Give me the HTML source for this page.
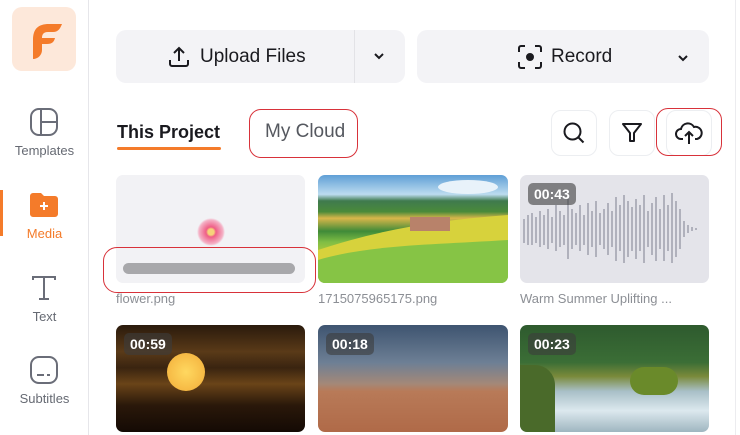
<!DOCTYPE html>
<html><head><meta charset="utf-8"><style>
*{box-sizing:border-box;margin:0;padding:0}
body{width:740px;height:435px;overflow:hidden;background:#fff;font-family:"Liberation Sans",sans-serif;position:relative;color:#1a1a1f}
.a{position:absolute}
.side{left:0;top:0;width:89px;height:435px;border-right:1px solid #e6e6ea}
.lbl{position:absolute;width:89px;text-align:center;font-size:13px;color:#666a73;left:0}
.btn{background:#f3f3f6;border-radius:10px}
.ib{width:46px;height:46px;border:1px solid #eceef1;border-radius:10px;background:#fff}
.card{border-radius:7px;overflow:hidden}
.dur{position:absolute;left:8px;top:8px;background:rgba(60,60,60,.6);color:#fff;font-weight:bold;font-size:14px;padding:3px 6px;border-radius:5px}
.name{font-size:13px;color:#8c8f95}
.red{border:1.5px solid #d8323a;border-radius:12px}
</style></head><body>
<div class="a side"></div>
<div class="a" style="left:12px;top:7px;width:64px;height:64px;background:#fde8da;border-radius:10px">
<svg width="64" height="64" viewBox="0 0 64 64"><path d="M21 50 L21 33 C21 22 26 17 37 17 L50 17 C48 22 46 25 41 25 L36 25 C31 25 30 28 30 31 L43 31 C42 35 40 37 35 37 L30 37 L30 43 C30 48 26 52 21 52 Z" fill="#f47b2a"/></svg></div>
<svg class="a" style="left:29px;top:107px" width="30" height="30" viewBox="0 0 30 30" fill="none" stroke="#6a6d78" stroke-width="2"><rect x="2" y="2" width="26" height="26" rx="8"/><path d="M12 2V28M12 15H28"/></svg>
<div class="lbl" style="top:143px">Templates</div>
<div class="a" style="left:0;top:190px;width:3px;height:46px;background:#f47b2a"></div>
<svg class="a" style="left:29px;top:191px" width="30" height="28" viewBox="0 0 30 28"><path d="M1 5a3 3 0 0 1 3-3h8l3 3h11a3 3 0 0 1 3 3v15a3 3 0 0 1-3 3H4a3 3 0 0 1-3-3z" fill="#f47b2a"/><path d="M15 11v8M11 15h8" stroke="#fff" stroke-width="2"/></svg>
<div class="lbl" style="top:226px;color:#f47b2a">Media</div>
<svg class="a" style="left:30px;top:274px" width="28" height="28" viewBox="0 0 28 28" fill="none" stroke="#6a6d78" stroke-width="2"><path d="M3 6V3H25V6M14 3V25M9 25H19"/></svg>
<div class="lbl" style="top:309px">Text</div>
<svg class="a" style="left:29px;top:355px" width="30" height="30" viewBox="0 0 30 30" fill="none" stroke="#6a6d78" stroke-width="2"><rect x="2" y="2" width="26" height="26" rx="8"/><path d="M8 20H15M18 20H21"/></svg>
<div class="lbl" style="top:391px">Subtitles</div>

<div class="a btn" style="left:116px;top:30px;width:289px;height:53px"></div>
<div class="a" style="left:354px;top:30px;width:1px;height:53px;background:#e2e2e6"></div>
<svg class="a" style="left:167px;top:45px" width="24" height="24" viewBox="0 0 24 24" fill="none" stroke="#1a1a1f" stroke-width="2"><path d="M12 16V3M7 8l5-5 5 5M3 15v4a2 2 0 0 0 2 2h14a2 2 0 0 0 2-2v-4"/></svg>
<div class="a" style="left:200px;top:46px;font-size:19px">Upload Files</div>
<svg class="a" style="left:373px;top:52px" width="12" height="8" viewBox="0 0 12 8" fill="none" stroke="#1a1a1f" stroke-width="2"><path d="M2 2l4 4 4-4"/></svg>
<div class="a btn" style="left:417px;top:30px;width:292px;height:53px"></div>
<svg class="a" style="left:517px;top:44px" width="26" height="26" viewBox="0 0 26 26" fill="none" stroke="#1a1a1f" stroke-width="2"><path d="M2 8V4a2 2 0 0 1 2-2h4M18 2h4a2 2 0 0 1 2 2v4M24 18v4a2 2 0 0 1-2 2h-4M8 24H4a2 2 0 0 1-2-2v-4"/><circle cx="13" cy="13" r="3" fill="#1a1a1f"/></svg>
<div class="a" style="left:551px;top:46px;font-size:19px">Record</div>
<svg class="a" style="left:677px;top:54px" width="12" height="8" viewBox="0 0 12 8" fill="none" stroke="#1a1a1f" stroke-width="2"><path d="M2 2l4 4 4-4"/></svg>

<div class="a" style="left:117px;top:122px;font-size:18px;font-weight:bold">This Project</div>
<div class="a" style="left:117px;top:147px;width:104px;height:3px;background:#f47b2a;border-radius:2px"></div>
<div class="a red" style="left:249px;top:109px;width:109px;height:49px"></div>
<div class="a" style="left:265px;top:121px;font-size:19px;color:#55585f">My Cloud</div>

<div class="a ib" style="left:551px;top:110px"></div>
<svg class="a" style="left:562px;top:121px" width="24" height="24" viewBox="0 0 24 24" fill="none" stroke="#1a1a1f" stroke-width="2"><circle cx="10.5" cy="10.5" r="8"/><path d="M16.5 16.5l5 5"/></svg>
<div class="a ib" style="left:609px;top:110px"></div>
<svg class="a" style="left:620px;top:121px" width="24" height="24" viewBox="0 0 24 24" fill="none" stroke="#1a1a1f" stroke-width="2" stroke-linejoin="round"><path d="M3 3h18l-7 9v8h-4v-8z"/></svg>
<div class="a ib" style="left:666px;top:110px"></div>
<div class="a red" style="left:656px;top:108px;width:66px;height:48px"></div>
<svg class="a" style="left:674px;top:121px" width="30" height="24" viewBox="0 0 30 24" fill="none" stroke="#1a1a1f" stroke-width="2"><path d="M9 18H7a5 5 0 0 1 0-10 7 7 0 0 1 13-2 6 6 0 0 1 3 12h-2M15 23V11M11 15l4-4 4 4"/></svg>

<div class="a" style="left:735px;top:0;width:1px;height:435px;background:#ececef"></div>

<!-- row1 -->
<div class="a card" style="left:116px;top:175px;width:189px;height:108px;background:#f2f2f5"></div>
<div class="a" style="left:196px;top:218px;width:30px;height:28px;border-radius:50%;background:radial-gradient(circle at 50% 50%,#f6d27a 0 3px,#ef5e86 5px,#f4b2c6 12px,transparent 14px)"></div>
<div class="a" style="left:123px;top:263px;width:172px;height:11px;background:#a8a8ab;border-radius:6px"></div>
<div class="a red" style="left:103px;top:247px;width:213px;height:46px;border-radius:14px"></div>
<div class="a name" style="left:116px;top:291px">flower.png</div>

<div class="a card" style="left:318px;top:175px;width:190px;height:108px;background:linear-gradient(180deg,#5f9fd6 0,#bcdcef 18%,#3f7a4e 24%,#4a8a3a 34%,#d8b64a 40%,#3f8a38 52%,#7fbd44 62%,#c9d23a 78%,#7bbd3a 100%)">
<svg width="190" height="108" viewBox="0 0 190 108"><path d="M0 75 C60 55 120 45 190 40 L190 70 C130 80 70 95 0 108Z" fill="#d7d23c"/><path d="M0 108 L0 85 C50 70 110 70 190 65 L190 108Z" fill="#86c445"/><ellipse cx="150" cy="12" rx="30" ry="7" fill="#e8f2fa"/><rect x="92" y="42" width="40" height="14" fill="#b8826a"/></svg></div>
<div class="a name" style="left:318px;top:291px">1715075965175.png</div>

<div class="a card" style="left:520px;top:175px;width:189px;height:108px;background:#e4e4ea">
<svg width="189" height="108" viewBox="0 0 189 108" stroke="#9a9ba8" stroke-width="1.4"><path d="M4 44v24M8 40v30M12 38v32M16 42v26M20 36v36M24 40v30M28 34v40M32 42v26M36 30v46M40 36v36M44 40v30M48 24v60M52 34v40M56 38v32M60 30v46M64 40v30M68 28v52M72 36v36M76 26v56M80 38v32M84 34v40M88 28v52M92 36v36M96 22v64M100 30v46M104 20v68M108 26v56M112 32v44M116 24v60M120 30v46M124 20v68M128 36v36M132 28v52M136 22v64M140 34v40M144 20v66M148 30v46M152 18v70M156 26v56M160 34v40M164 46v16M168 50v8M172 52v4M176 53v2"/></svg>
<div class="dur">00:43</div></div>
<div class="a name" style="left:520px;top:291px">Warm Summer Uplifting ...</div>

<!-- row2 -->
<div class="a card" style="left:116px;top:325px;width:189px;height:107px;background:linear-gradient(180deg,#2a1a0c 0,#5a3a18 25%,#3a2410 40%,#6a4418 55%,#2a180a 75%,#140a04 100%)">
<div class="a" style="left:51px;top:28px;width:38px;height:38px;border-radius:50%;background:radial-gradient(#ffd860,#f2ac38)"></div>
<div class="dur">00:59</div></div>
<div class="a card" style="left:318px;top:325px;width:190px;height:107px;background:linear-gradient(180deg,#3e5470 0,#6d7f95 35%,#a48878 55%,#b87a58 62%,#b06a48 100%)">
<div class="dur">00:18</div></div>
<div class="a card" style="left:520px;top:325px;width:189px;height:107px;background:linear-gradient(180deg,#2e5a2e 0,#3b6e36 35%,#7a8a3a 48%,#a9c0c8 62%,#dce8ee 80%,#9fb6c0 100%)">
<div class="a" style="left:0;top:40px;width:35px;height:67px;background:#4a6a2a;border-radius:0 20px 0 0"></div>
<div class="a" style="left:110px;top:42px;width:48px;height:28px;background:#6a8a2a;border-radius:20px"></div>
<div class="dur">00:23</div></div>
</body></html>
